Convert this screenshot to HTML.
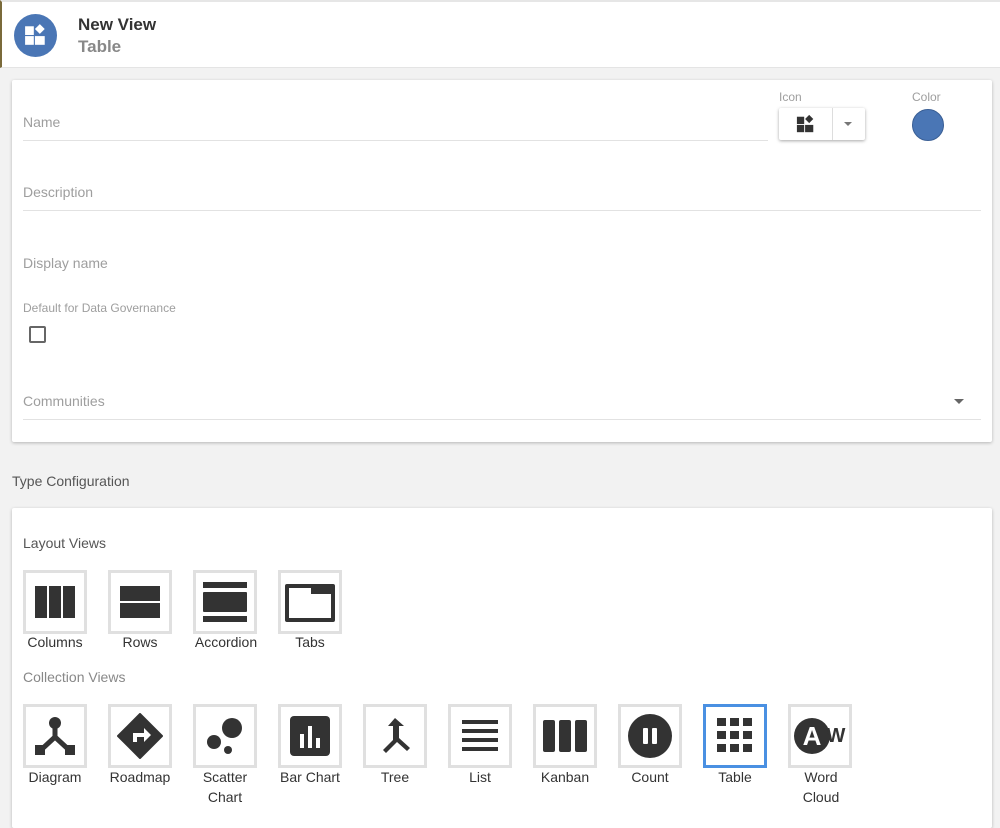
<!DOCTYPE html>
<html><head><meta charset="utf-8"><style>
*{box-sizing:border-box;margin:0;padding:0}
body{width:1000px;height:817px;overflow:hidden;background:#f2f2f2;font-family:"Liberation Sans",sans-serif;position:relative}
.a{position:absolute}
.hdr{left:0;top:0;width:1000px;height:68px;background:#fff;border-top:2px solid #e6e6e6;border-left:2px solid #7a6a3a;border-bottom:1px solid #e4e4e4}
.card{background:#fff;box-shadow:0 1px 3px rgba(0,0,0,.25);border-radius:2px}
.lbl{color:#9e9e9e;font-size:14px}
.line{height:1px;background:#e2e2e2}
.tile{width:64px;height:64px;border:3px solid #e0e0e0;background:#fff;display:flex;align-items:center;justify-content:center}
.tl{font-size:14px;color:#333;text-align:center;width:100px;line-height:20px}
</style></head><body>
<div class="a hdr"></div>
<div class="a" style="left:14px;top:14px;width:43px;height:43px;border-radius:50%;background:#4a76b5"></div>
<svg class="a" style="left:24px;top:23px" width="24" height="24" viewBox="0 0 22 22" fill="#fff"><rect x="1" y="3" width="8" height="8"/><rect x="1" y="12" width="8" height="8"/><rect x="10" y="12" width="9" height="8"/><path d="M14.5 1l4.5 4.5-4.5 4.5-4.5-4.5z"/></svg>
<div class="a" style="left:78px;top:15px;font-size:17px;font-weight:bold;color:#333">New View</div>
<div class="a" style="left:78px;top:37px;font-size:17px;font-weight:bold;color:#888">Table</div>

<div class="a card" style="left:12px;top:80px;width:980px;height:362px"></div>
<div class="a lbl" style="left:23px;top:114px">Name</div>
<div class="a line" style="left:23px;top:140px;width:745px"></div>
<div class="a" style="left:779px;top:90px;font-size:12px;color:#9e9e9e">Icon</div>
<div class="a" style="left:779px;top:108px;width:86px;height:32px;background:#fff;box-shadow:0 1px 3px rgba(0,0,0,.35);border-radius:2px"></div>
<div class="a" style="left:832px;top:108px;width:1px;height:32px;background:#ddd"></div>
<svg class="a" style="left:796px;top:114px" width="20" height="20" viewBox="0 0 22 22" fill="#333"><rect x="1" y="3" width="8" height="8"/><rect x="1" y="12" width="8" height="8"/><rect x="10" y="12" width="9" height="8"/><path d="M14.5 1l4.5 4.5-4.5 4.5-4.5-4.5z"/></svg>
<div class="a" style="left:844px;top:122px;border-left:4px solid transparent;border-right:4px solid transparent;border-top:4px solid #777"></div>
<div class="a" style="left:912px;top:90px;font-size:12px;color:#9e9e9e">Color</div>
<div class="a" style="left:912px;top:109px;width:32px;height:32px;border-radius:50%;background:#4a76b5;border:1px solid #3a5f95"></div>
<div class="a lbl" style="left:23px;top:184px">Description</div>
<div class="a line" style="left:23px;top:210px;width:958px"></div>
<div class="a lbl" style="left:23px;top:255px">Display name</div>
<div class="a" style="left:23px;top:301px;font-size:12px;color:#9e9e9e">Default for Data Governance</div>
<div class="a" style="left:29px;top:326px;width:17px;height:17px;border:2px solid #666;border-radius:2px"></div>
<div class="a lbl" style="left:23px;top:393px">Communities</div>
<div class="a" style="left:954px;top:399px;border-left:5px solid transparent;border-right:5px solid transparent;border-top:5px solid #666"></div>
<div class="a line" style="left:23px;top:419px;width:958px"></div>

<div class="a" style="left:12px;top:473px;font-size:14px;color:#555">Type Configuration</div>
<div class="a card" style="left:12px;top:508px;width:980px;height:320px"></div>
<div class="a" style="left:23px;top:535px;font-size:14px;color:#555">Layout Views</div>
<div class="a" style="left:23px;top:669px;font-size:14px;color:#888">Collection Views</div>

<div class="a tile" style="left:23px;top:570px"><svg width="40" height="32"><rect x="0" y="0" width="12" height="32" fill="#333"/><rect x="14" y="0" width="12" height="32" fill="#333"/><rect x="28" y="0" width="12" height="32" fill="#333"/></svg></div>
<div class="a tile" style="left:108px;top:570px"><svg width="40" height="32"><rect y="0" width="40" height="15" fill="#333"/><rect y="17" width="40" height="15" fill="#333"/></svg></div>
<div class="a tile" style="left:193px;top:570px"><svg width="44" height="40"><rect y="0" width="44" height="6" fill="#333"/><rect y="10" width="44" height="20" rx="1" fill="#333"/><rect y="34" width="44" height="6" fill="#333"/></svg></div>
<div class="a tile" style="left:278px;top:570px"><svg width="50" height="40"><path d="M2 4h46v34H2z" fill="none" stroke="#333" stroke-width="4" stroke-linejoin="round"/><rect x="26" y="2" width="22" height="10" fill="#333"/></svg></div>
<div class="a tl" style="left:5px;top:632px">Columns</div>
<div class="a tl" style="left:90px;top:632px">Rows</div>
<div class="a tl" style="left:176px;top:632px">Accordion</div>
<div class="a tl" style="left:260px;top:632px">Tabs</div>

<div class="a tile" style="left:23px;top:704px"><svg width="42" height="42" viewBox="0 0 42 42"><circle cx="21" cy="8" r="6" fill="#333"/><path d="M21 12v10L8 34M21 22l13 12" stroke="#333" stroke-width="5" fill="none"/><rect x="1" y="30" width="10" height="10" fill="#333"/><rect x="31" y="30" width="10" height="10" fill="#333"/></svg></div>
<div class="a tile" style="left:108px;top:704px"><svg width="46" height="46" viewBox="0 0 46 46"><path d="M23 1l22 22-22 22L1 23z" fill="#333" stroke="#333" stroke-width="2" stroke-linejoin="round"/><path d="M16 29v-9h11v-5l7 7-7 7v-5h-7v5z" fill="#fff"/></svg></div>
<div class="a tile" style="left:193px;top:704px"><svg width="42" height="42"><circle cx="28" cy="13" r="10" fill="#333"/><circle cx="10" cy="27" r="7" fill="#333"/><circle cx="24" cy="35" r="4" fill="#333"/></svg></div>
<div class="a tile" style="left:278px;top:704px"><svg width="40" height="40"><rect width="40" height="40" rx="4" fill="#333"/><rect x="10" y="18" width="4" height="14" fill="#fff"/><rect x="18" y="10" width="4" height="22" fill="#fff"/><rect x="26" y="22" width="4" height="10" fill="#fff"/></svg></div>
<div class="a tile" style="left:363px;top:704px"><svg width="30" height="40" viewBox="0 0 30 40"><path d="M15 2l-7 8h5v14l-10 10 3 3 11-11 10 9 3-3-11-10V10h5z" fill="#333"/></svg></div>
<div class="a tile" style="left:448px;top:704px"><svg width="36" height="32"><rect y="0" width="36" height="4" fill="#333"/><rect y="9" width="36" height="4" fill="#333"/><rect y="18" width="36" height="4" fill="#333"/><rect y="27" width="36" height="4" fill="#333"/></svg></div>
<div class="a tile" style="left:533px;top:704px"><svg width="44" height="32"><rect x="0" width="12" height="32" rx="2" fill="#333"/><rect x="16" width="12" height="32" rx="2" fill="#333"/><rect x="32" width="12" height="32" rx="2" fill="#333"/></svg></div>
<div class="a tile" style="left:618px;top:704px"><svg width="46" height="46"><circle cx="23" cy="23" r="22" fill="#333"/><rect x="16" y="15" width="5" height="16" rx="1" fill="#fff"/><rect x="25" y="15" width="5" height="16" rx="1" fill="#fff"/></svg></div>
<div class="a tile" style="left:703px;top:704px;border-color:#4a90e2"><svg width="36" height="36"><g fill="#333"><rect x="0" y="0" width="9" height="8"/><rect x="13" y="0" width="9" height="8"/><rect x="26" y="0" width="9" height="8"/><rect x="0" y="13" width="9" height="8"/><rect x="13" y="13" width="9" height="8"/><rect x="26" y="13" width="9" height="8"/><rect x="0" y="26" width="9" height="8"/><rect x="13" y="26" width="9" height="8"/><rect x="26" y="26" width="9" height="8"/></g></svg></div>
<div class="a tile" style="left:788px;top:704px"><svg width="56" height="44" viewBox="0 0 56 44"><circle cx="20" cy="22" r="18" fill="#333"/><text x="20" y="31" font-family="Liberation Sans" font-weight="bold" font-size="26" fill="#fff" text-anchor="middle">A</text><text x="44" y="28" font-family="Liberation Sans" font-weight="bold" font-size="20" fill="#333" text-anchor="middle">W</text></svg></div>
<div class="a tl" style="left:5px;top:767px">Diagram</div>
<div class="a tl" style="left:90px;top:767px">Roadmap</div>
<div class="a tl" style="left:175px;top:767px">Scatter<br>Chart</div>
<div class="a tl" style="left:260px;top:767px">Bar Chart</div>
<div class="a tl" style="left:345px;top:767px">Tree</div>
<div class="a tl" style="left:430px;top:767px">List</div>
<div class="a tl" style="left:515px;top:767px">Kanban</div>
<div class="a tl" style="left:600px;top:767px">Count</div>
<div class="a tl" style="left:685px;top:767px">Table</div>
<div class="a tl" style="left:771px;top:767px">Word<br>Cloud</div>
</body></html>
